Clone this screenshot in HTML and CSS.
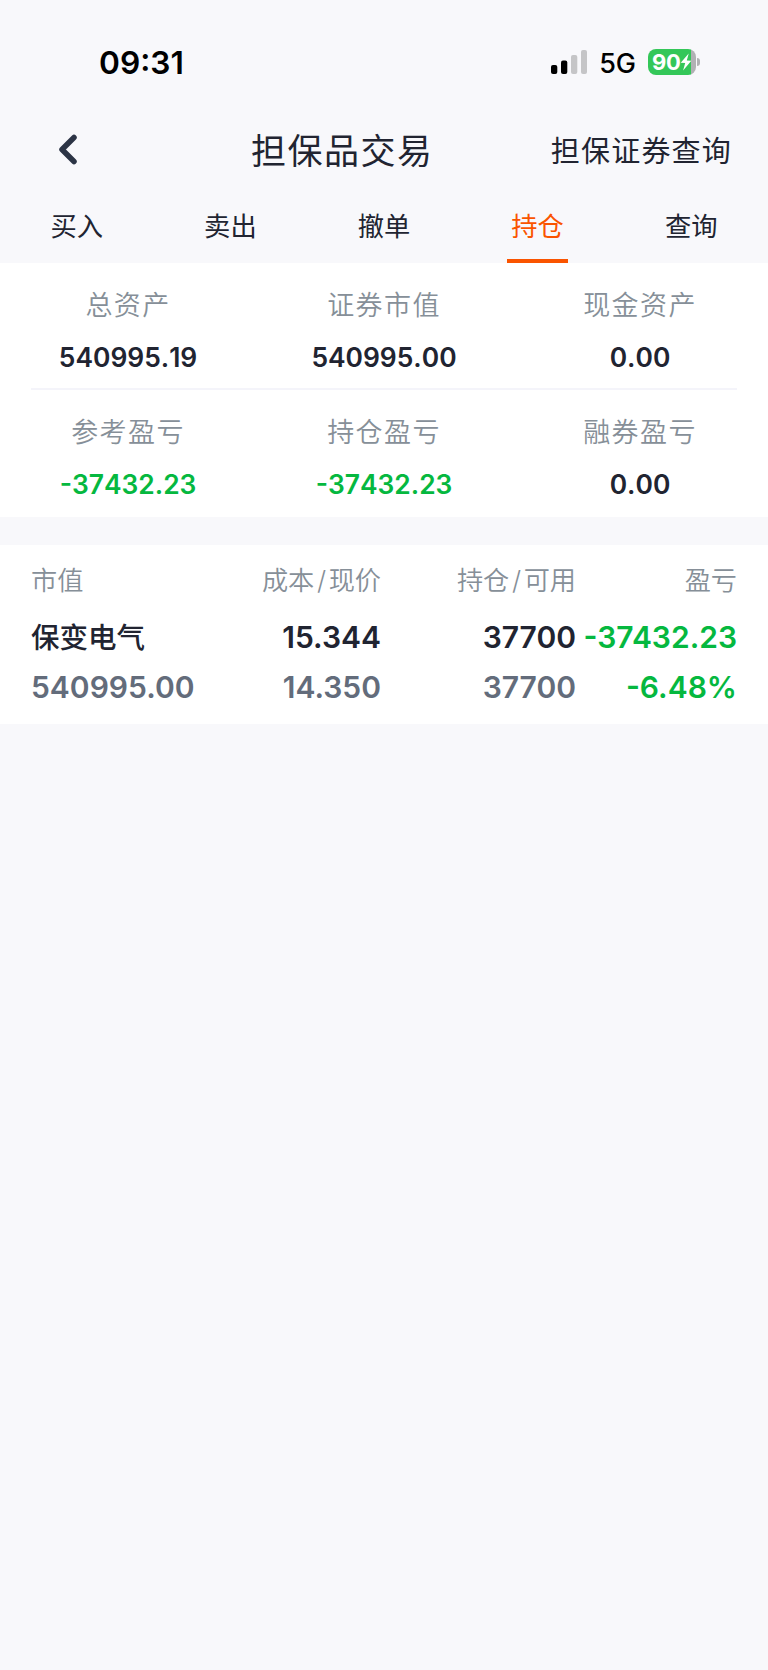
FILE: index.html
```html
<!DOCTYPE html>
<html lang="zh-CN">
<head>
<meta charset="UTF-8">
<meta name="viewport" content="width=device-width, initial-scale=1.0">
<title>担保品交易</title>
<link rel="stylesheet" href="styles.css">
</head>
<body>

<!-- Status bar -->
<div class="status-bar">
    <span class="time">09:31</span>
    <div class="status-icons">
        <svg class="signal" width="36" height="24" viewBox="0 0 36 24">
            <rect x="0" y="15" width="6.3" height="9" rx="2"/>
            <rect x="10" y="10.5" width="6.3" height="13.5" rx="2"/>
            <rect class="off" x="20" y="5" width="6.3" height="19" rx="2"/>
            <rect class="off" x="30" y="0" width="6" height="24" rx="2"/>
        </svg>
        <span class="network">5G</span>
        <div class="battery">
            <span class="level">90</span>
            <svg class="bolt" width="12" height="18" viewBox="0 0 12 18">
                <path d="M8.7 0.5 L0.7 9.7 L5.2 10 L3.1 17.5 L11.3 7.7 L6.8 7.4 Z"/>
            </svg>
        </div>
        <span class="battery-cap"></span>
    </div>
</div>

<!-- Title bar -->
<div class="title-bar">
    <a href="#" class="back">
        <svg width="20" height="32" viewBox="0 0 20 32">
            <path d="M16 3.5 L4 15.5 L16 27.5"/>
        </svg>
    </a>
    <h1>担保品交易</h1>
    <a href="#" class="link">担保证券查询</a>
</div>

<div class="tabs">
    <a href="#" class="tab">买入</a>
    <a href="#" class="tab">卖出</a>
    <a href="#" class="tab">撤单</a>
    <a href="#" class="tab active">持仓</a>
    <a href="#" class="tab">查询</a>
</div>

<!-- Assets summary -->
<div class="summary">
    <div class="summary-row">
        <div class="item"><span class="label">总资产</span><span class="value">540995.19</span></div>
        <div class="item"><span class="label">证券市值</span><span class="value">540995.00</span></div>
        <div class="item"><span class="label">现金资产</span><span class="value">0.00</span></div>
    </div>
    <div class="summary-row">
        <div class="item"><span class="label">参考盈亏</span><span class="value down">-37432.23</span></div>
        <div class="item"><span class="label">持仓盈亏</span><span class="value down">-37432.23</span></div>
        <div class="item"><span class="label">融券盈亏</span><span class="value">0.00</span></div>
    </div>
</div>

<!-- Positions -->
<div class="positions">
    <div class="row head">
        <span>市值</span>
        <span>成本<i>/</i>现价</span>
        <span>持仓<i>/</i>可用</span>
        <span>盈亏</span>
    </div>
    <div class="row main">
        <span class="name">保变电气</span>
        <span>15.344</span>
        <span>37700</span>
        <span class="down">-37432.23</span>
    </div>
    <div class="row sub">
        <span>540995.00</span>
        <span>14.350</span>
        <span>37700</span>
        <span class="down">-6.48%</span>
    </div>
</div>

</body>
</html>
```
FILE: styles.css
```css
* {
    box-sizing: border-box;
}
body {
    font-family: Inter, "Noto Sans CJK SC", sans-serif;
    margin: 0;
    padding: 0;
    background-color: #f8f8fb;
    color: #212431;
}
a {
    color: inherit;
    text-decoration: none;
}
.status-bar {
    display: flex;
    justify-content: space-between;
    align-items: center;
    height: 84px;
    margin-top: 20px;
    padding: 0 68px 0 99px;
    color: #000;
}
.time {
    padding-top: 1px;
    font-size: 31.7px;
    font-weight: 600;
}
.status-icons {
    display: flex;
    align-items: center;
}
.signal .off {
    fill: #c5c5c7;
}
.network {
    margin: 2px 12px 0 12px;
    font-size: 27px;
    font-weight: 500;
}
.battery {
    display: flex;
    align-items: center;
    width: 48px;
    height: 26px;
    padding-left: 4px;
    border-radius: 8px;
    background: linear-gradient(to right, #34c759 43px, #b1b1b4 43px);
}
.level {
    color: #fff;
    font-size: 22px;
    font-weight: 700;
    letter-spacing: -0.4px;
}
.bolt {
    flex-shrink: 0;
    fill: #fff;
}
.battery-cap {
    width: 3px;
    height: 8px;
    margin-left: 1px;
    border-radius: 0 3px 3px 0;
    background-color: #b1b1b4;
}
.title-bar {
    display: grid;
    grid-template-columns: 193px auto 1fr;
    align-items: center;
    height: 88px;
    margin-bottom: 4px;
    padding: 0 36px 0 58px;
}
.back svg {
    display: block;
    margin-top: 3px;
    fill: none;
    stroke: #2c3445;
    stroke-width: 5.5;
    stroke-linecap: round;
    stroke-linejoin: round;
}
.title-bar h1 {
    margin: 0;
    font-size: 35px;
    font-weight: 400;
    letter-spacing: 1.5px;
}
.link {
    justify-self: end;
    padding-top: 2px;
    font-size: 29px;
    letter-spacing: 1.2px;
}
.tabs {
    display: grid;
    grid-template-columns: repeat(5, 1fr);
    justify-items: center;
    height: 67px;
}
.tab {
    width: 61px;
    line-height: 62px;
    text-align: center;
    font-size: 26.3px;
    border-bottom: 4px solid transparent;
}
.tab.active {
    color: #fa5400;
    border-bottom-color: #fa5400;
}
.summary {
    height: 254px;
    background-color: #fff;
}
.summary-row {
    display: grid;
    grid-template-columns: repeat(3, 1fr);
    height: 127px;
    background: linear-gradient(#f4f4fa, #f4f4fa) center bottom / 706px 2px no-repeat;
}
.summary-row:last-child {
    background: none;
}
.item {
    display: flex;
    flex-direction: column;
    align-items: center;
    padding-top: 23px;
}
.label {
    line-height: 40px;
    font-size: 27px;
    font-weight: 350;
    letter-spacing: 1.4px;
    color: #868f98;
}
.value {
    margin-top: 11px;
    line-height: 40px;
    font-size: 26.4px;
    font-weight: 600;
    font-kerning: none;
}
.down {
    color: #05b83f;
}
.positions {
    height: 179px;
    margin-top: 28px;
    padding: 16px 31px 0;
    background-color: #fff;
}
.row {
    display: grid;
    grid-template-columns: 175px 175px 195px 161px;
    height: 50px;
    line-height: 50px;
    font-size: 30px;
    font-weight: 600;
    text-align: right;
    white-space: nowrap;
}
.row span:first-child {
    text-align: left;
}
.row.head {
    height: 51px;
    line-height: 40px;
    font-size: 26.2px;
    font-weight: 350;
    color: #868f98;
}
.row.head i {
    margin: 0 2.6px;
    font-style: normal;
}
.row .name {
    padding-top: 1px;
    font-size: 28.5px;
    font-weight: 500;
}
.row.sub {
    color: #636c7b;
}
.row.sub .down {
    color: #05b83f;
}
```
